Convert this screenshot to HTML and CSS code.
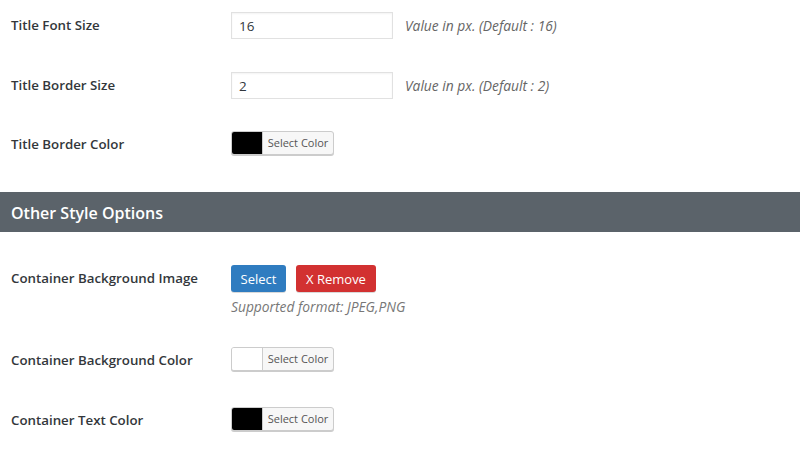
FILE: index.html
```html
<!DOCTYPE html>
<html lang="en">
<head>
    <meta charset="UTF-8">
    <meta name="viewport" content="width=device-width, initial-scale=1.0">
    <title>Style Settings</title>
    <link rel="stylesheet" href="styles.css">
</head>
<body>
    <!-- title options -->
    <div class="form-table">
        <div class="row">
            <label class="label">Title Font Size</label>
            <div class="field">
                <input type="text" class="text-input" value="16">
                <span class="hint">Value in px. (Default : 16)</span>
            </div>
        </div>
        <div class="row">
            <label class="label">Title Border Size</label>
            <div class="field">
                <input type="text" class="text-input" value="2">
                <span class="hint">Value in px. (Default : 2)</span>
            </div>
        </div>
        <div class="row row-color">
            <label class="label">Title Border Color</label>
            <div class="field">
                <button type="button" class="color-btn">
                    <span class="swatch swatch-black"></span>
                    <span class="color-text">Select Color</span>
                </button>
            </div>
        </div>
    </div>

    <!-- other style options -->
    <h3 class="section-title">Other Style Options</h3>

    <div class="form-table form-table-top">
        <div class="row">
            <label class="label">Container Background Image</label>
            <div class="field field-stack">
                <div class="btn-group">
                    <button type="button" class="btn btn-blue">Select</button>
                    <button type="button" class="btn btn-red">X Remove</button>
                </div>
                <p class="note">Supported format: JPEG,PNG</p>
            </div>
        </div>
        <div class="row row-color">
            <label class="label">Container Background Color</label>
            <div class="field">
                <button type="button" class="color-btn">
                    <span class="swatch swatch-white"></span>
                    <span class="color-text">Select Color</span>
                </button>
            </div>
        </div>
        <div class="row row-color">
            <label class="label">Container Text Color</label>
            <div class="field">
                <button type="button" class="color-btn">
                    <span class="swatch swatch-black"></span>
                    <span class="color-text">Select Color</span>
                </button>
            </div>
        </div>
    </div>
</body>
</html>
```

FILE: styles.css
```css
/* page */
body {
    margin: 0;
    background: #fff;
    font-family: "Open Sans", "Noto Sans", sans-serif;
    font-size: 13px;
    color: #32373c;
}

/* form rows */
.form-table {
    padding-left: 11px;
}

.form-table-top {
    margin-top: 21px;
}

.row {
    display: flex;
    align-items: flex-start;
    min-height: 60px;
    padding: 12px 0 21px;
    box-sizing: border-box;
}

.row-color {
    padding-top: 11px;
}

.label {
    width: 220px;
    flex-shrink: 0;
    font-weight: 600;
    font-size: 13.3px;
    line-height: 26px;
    color: #33373b;
}

.field {
    display: flex;
    align-items: center;
}

.field-stack {
    flex-direction: column;
    align-items: flex-start;
}

/* text inputs */
.text-input {
    width: 162px;
    height: 27px;
    box-sizing: border-box;
    padding: 0 7px;
    border: 1px solid #e1e1e1;
    box-shadow: inset 0 1px 2px rgba(0, 0, 0, 0.05);
    font-family: inherit;
    font-size: 13.5px;
    color: #32373c;
    outline: none;
}

.hint {
    margin-left: 12px;
    font-style: italic;
    font-size: 13.8px;
    color: #666;
}

/* color picker button */
.color-btn {
    display: flex;
    height: 24px;
    padding: 0;
    border: 1px solid #ccc;
    border-radius: 3px;
    background: #f7f7f7;
    box-shadow: 0 1px 0 #ccc;
    overflow: hidden;
    font-family: inherit;
    cursor: pointer;
}

.swatch {
    width: 30px;
    height: 100%;
    border-right: 1px solid #ccc;
}

.swatch-black {
    background: #000;
}

.swatch-white {
    background: #fff;
}

.color-text {
    width: 70px;
    line-height: 22px;
    font-size: 11px;
    color: #555;
    text-align: center;
}

/* section header */
.section-title {
    margin: 12px 0 0;
    height: 40px;
    padding-left: 11px;
    background: #5b636a;
    color: #fff;
    font-size: 16px;
    font-weight: 600;
    line-height: 42px;
}

/* upload buttons */
.btn-group {
    display: flex;
    gap: 10px;
}

.btn {
    height: 27px;
    padding: 0;
    border: none;
    border-radius: 3px;
    color: #fff;
    font-family: inherit;
    font-size: 13px;
    cursor: pointer;
    box-shadow: 0 1px 0 rgba(0, 0, 0, 0.15);
}

.btn-blue {
    width: 55px;
    background: #2f7cc0;
}

.btn-red {
    width: 80px;
    background: #d23131;
}

.note {
    margin: 6px 0 0;
    line-height: 17px;
    font-style: italic;
    font-size: 13.8px;
    color: #777;
}
```
